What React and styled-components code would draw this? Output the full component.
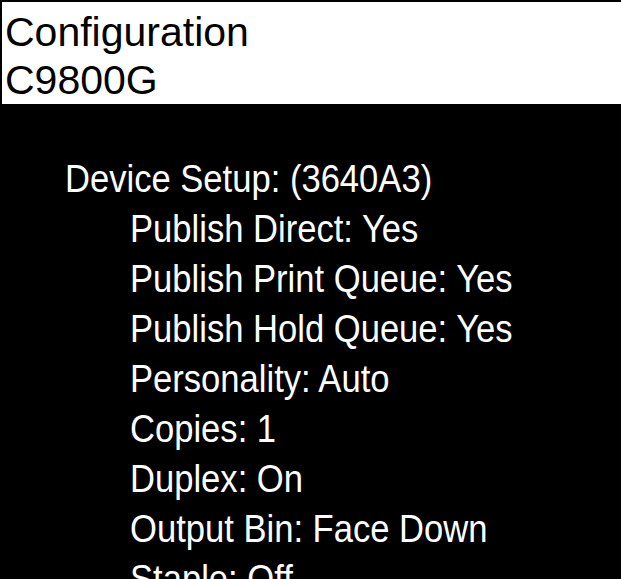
import React from 'react'
import styled, { createGlobalStyle } from 'styled-components'

const GlobalStyle = createGlobalStyle`
  html, body {
    margin: 0;
    padding: 0;
    background: #000;
    overflow: hidden;
  }
  body {
    font-family: "Liberation Sans", Arial, Helvetica, sans-serif;
  }
`

const settings = [
    { label: 'Device Setup: (3640A3)', level: 0 },
    { label: 'Publish Direct: Yes', level: 1 },
    { label: 'Publish Print Queue: Yes', level: 1 },
    { label: 'Publish Hold Queue: Yes', level: 1 },
    { label: 'Personality: Auto', level: 1 },
    { label: 'Copies: 1', level: 1 },
    { label: 'Duplex: On', level: 1 },
    { label: 'Output Bin: Face Down', level: 1 },
    { label: 'Staple: Off', level: 1 },
]

const App = () => {
    return (
        <Screen>
            <GlobalStyle />
            <Header>
                <Title>Configuration</Title>
                <Title>C9800G</Title>
            </Header>
            <Body>
                {settings.map((item, i) =>
                    <Line key={i} level={item.level}>
                        <Narrow>{item.label}</Narrow>
                    </Line>
                )}
            </Body>
        </Screen>
    )
}

const Screen = styled.div`
    width: 621px;
    height: 579px;
    overflow: hidden;
    background: #000;
    display: flex;
    flex-direction: column;
`

const Header = styled.div`
    flex-shrink: 0;
    height: 104px;
    box-sizing: border-box;
    background: #fff;
    border-top: 2px solid #000;
    border-left: 2px solid #000;
    padding: 6px 0 0 3px;
`

const Title = styled.div`
    font-size: 41px;
    line-height: 48px;
    color: #000;
    white-space: nowrap;
`

const Body = styled.div`
    padding: 50px 0 0 65px;
    display: flex;
    flex-direction: column;
`

const Line = styled.div`
    flex-shrink: 0;
    padding-left: ${(props) => props.level * 65}px;
    height: 50px;
    line-height: 50px;
    font-size: 38px;
    color: #fff;
    white-space: nowrap;
`

const Narrow = styled.span`
    display: inline-block;
    transform: scaleX(0.91);
    transform-origin: left center;
`

export default App
